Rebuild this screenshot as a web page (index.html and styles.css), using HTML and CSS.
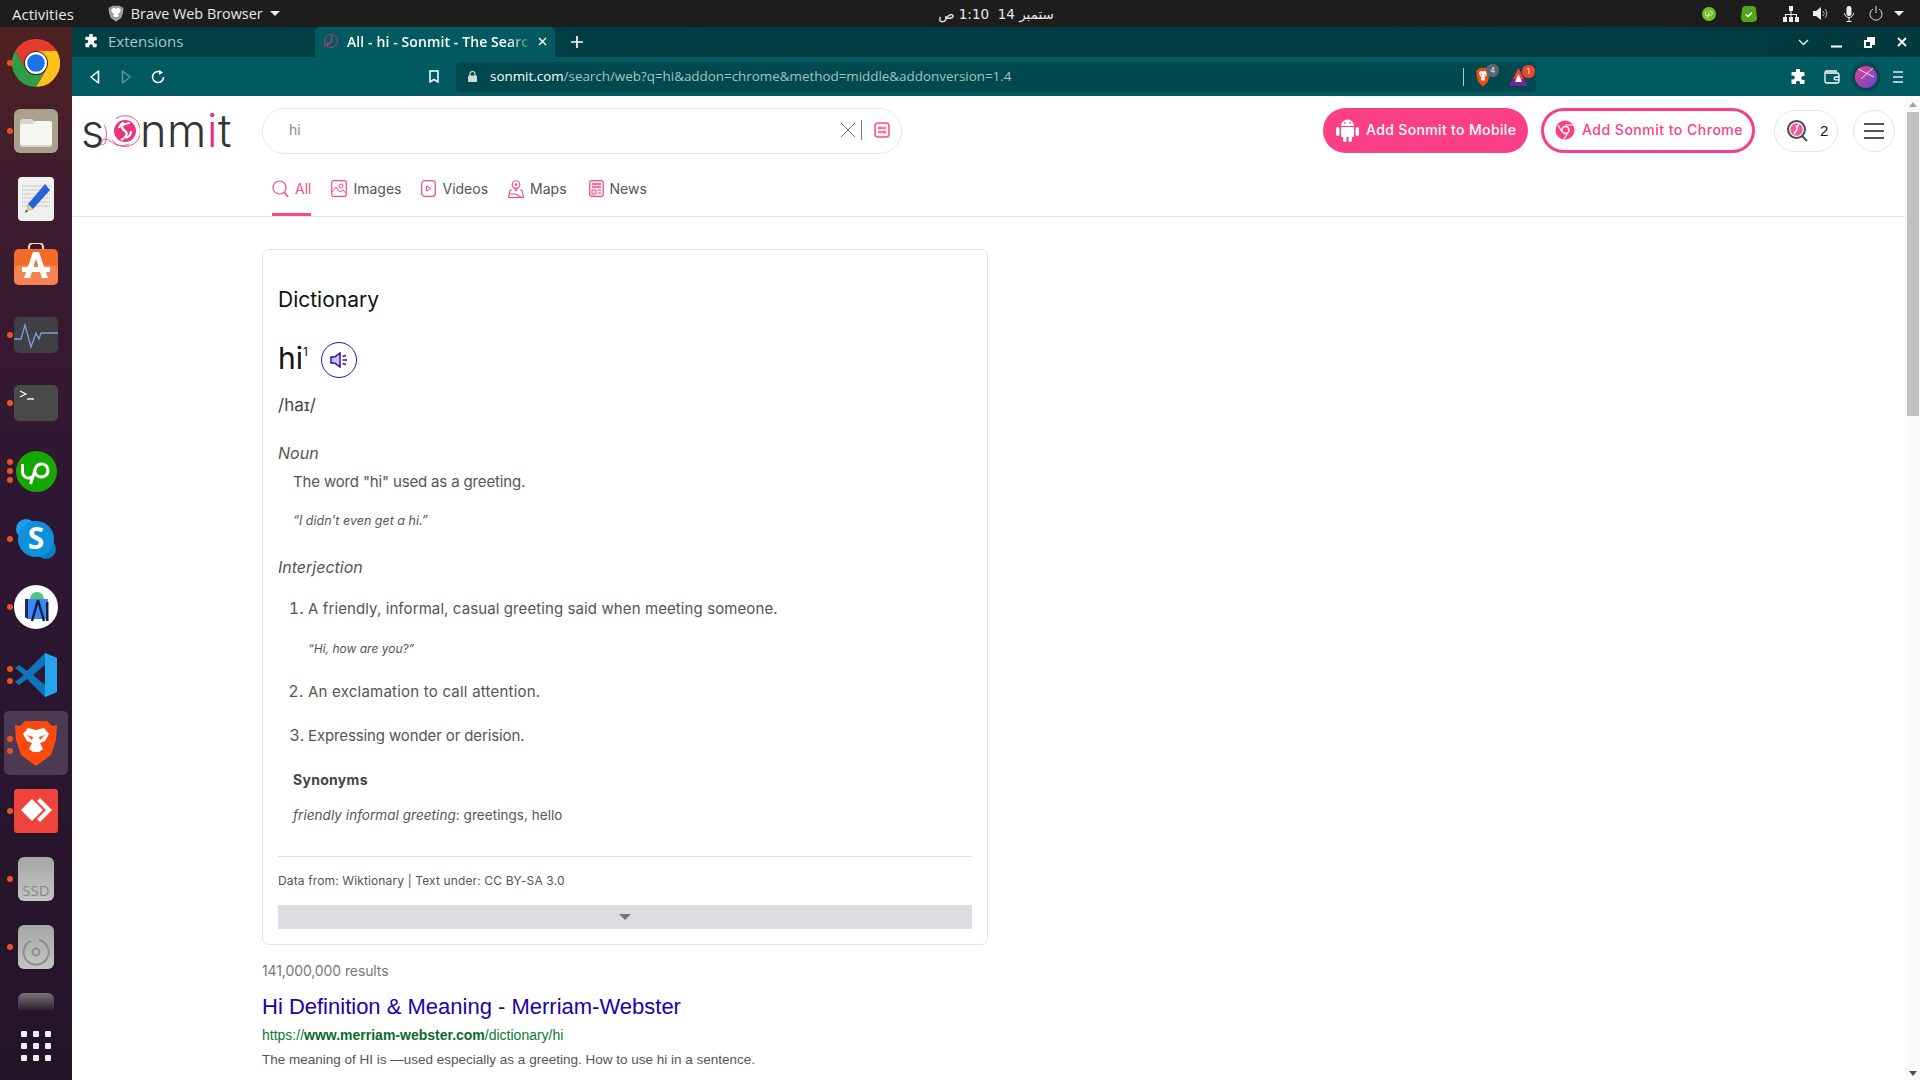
FILE: index.html
```html
<!DOCTYPE html>
<html lang="en">
<head>
<meta charset="utf-8">
<title>All - hi - Sonmit</title>
<link rel="stylesheet" href="styles.css">
</head>
<body>
<svg class="defs" width="0" height="0">
  <defs>
    <symbol id="puzzle" viewBox="0 0 16 16"><path fill="#fff" d="M6 1.200a2 2 0 0 1 4 0V3h3.500a1 1 0 0 1 1 1v3h-1.300a2 2 0 0 0 0 4h1.300v3a1 1 0 0 1-1 1H10v-1.200a2 2 0 0 0-4 0V15H2.500a1 1 0 0 1-1-1v-3.400h1.300a2 2 0 0 0 0-4H1.500V4a1 1 0 0 1 1-1H6z"/></symbol>
    <symbol id="lion" viewBox="0 0 44 48">
      <path fill="#fb4a10" d="M11 2h22l5 5 5-1-1 15-5 15-15 11-15-11L2 21 1 6l5 1z"/>
      <path fill="#fff" d="M14 9l8 2 8-2 5 6-4 7-5 2 3 6-4 3h-6l-4-3 3-6-5-2-4-7z"/>
      <path fill="#fb4a10" d="M13 16l6 2-1 3zM31 16l-6 2 1 3z"/>
    </symbol>
  </defs>
</svg>

<header class="gnome-bar">
  <span class="activities">Activities</span>
  <span class="app-menu">
    <svg class="app-lion" width="16" height="17"><use href="#lion"/></svg>
    <span>Brave Web Browser</span>
    <i class="caret"></i>
  </span>
  <span class="clock" dir="rtl">ستمبر 14&nbsp;&nbsp;1:10 ص</span>
  <span class="tray">
    <svg width="14" height="14" viewBox="0 0 14 14" class="tray-up"><circle cx="7" cy="7" r="7" fill="#6cc12b"/><path d="M3.500 4.500v3a1.500 1.500 0 0 0 3 0c0-1 .5-3 2-3a1.800 1.800 0 0 1 0 3.800c-1 0-1.700-.6-2-1.500M5.500 11l1.200-4" fill="none" stroke="#dff5c8" stroke-width=".9"/></svg>
    <svg width="16" height="16" viewBox="0 0 16 16" class="tray-ok"><path d="M5 0h6a4 4 0 0 1 4 3l1 8a4 4 0 0 1-4 5H5a4 4 0 0 1-5-4l1-9a4 4 0 0 1 4-3z" fill="#55a51c"/><path d="M5 8.500l2 2 4-4" fill="none" stroke="#fff" stroke-width="1.500"/></svg>
    <svg width="16" height="16" viewBox="0 0 16 16" class="tray-net"><path fill="#eee" d="M6 0h4v5H6zM0 11h4v5H0zM6 11h4v5H6zM12 11h4v5h-4zM7.500 5h1v3h5.500v3h-1V9H8.500v2h-1V9H3v2H2V8h5.500z"/></svg>
    <svg width="15" height="15" viewBox="0 0 15 15" class="tray-vol"><path fill="#eee" d="M0 5h3l5-4v13l-5-4H0z"/><path d="M10 5a3.500 3.500 0 0 1 0 5M12 3a6.500 6.500 0 0 1 0 9" fill="none" stroke="#bbb" stroke-width="1"/></svg>
    <svg width="10" height="16" viewBox="0 0 10 16" class="tray-mic"><rect x="2.500" y="0" width="5" height="10" rx="2.500" fill="#eee"/><path d="M.5 7a4.500 4.500 0 0 0 9 0M5 11.500V15M2.500 15.500h5" fill="none" stroke="#eee"/></svg>
    <svg width="14" height="15" viewBox="0 0 14 15" class="tray-pow"><path d="M4 3a6 6 0 1 0 6 0M7 0v7" fill="none" stroke="#ddd" stroke-width="1"/></svg>
    <i class="caret tray-caret"></i>
  </span>
</header>

<div class="desktop">
  <nav class="dock">
    <div class="dock-list">
      <div class="dock-item"><i class="dot"></i>
        <svg width="48" height="48" viewBox="0 0 48 48"><path fill="#e33b2e" d="M24 12h20.800A24 24 0 0 0 3.200 12l10.400 18A12 12 0 0 1 24 12z"/><path fill="#fcc21b" d="M44.800 12H24a12 12 0 0 1 10.400 18L24 48a24 24 0 0 0 20.800-36z"/><path fill="#2f9e44" d="M3.200 12l10.400 18a12 12 0 0 0 20.800 0L24 48A24 24 0 0 1 3.200 12z"/><circle cx="24" cy="24" r="11" fill="#fff"/><circle cx="24" cy="24" r="8.800" fill="#1a73e8"/></svg></div>
      <div class="dock-item"><i class="dot"></i>
        <svg width="44" height="44" viewBox="0 0 44 44"><rect width="44" height="44" rx="6" fill="#a8a18e"/><path d="M6 13a3 3 0 0 1 3-3h9l5 4h13a2 2 0 0 1 2 2v20a2 2 0 0 1-2 2H8a2 2 0 0 1-2-2z" fill="#d8d5cc"/><path d="M6 18a3 3 0 0 1 3-3h10l3-3h14a2 2 0 0 1 2 2v20a2 2 0 0 1-2 2H8a2 2 0 0 1-2-2z" fill="#f7f6f3"/></svg></div>
      <div class="dock-item">
        <svg width="36" height="44" viewBox="0 0 36 44"><rect width="36" height="44" rx="4" fill="#f0f0f0"/><path d="M4 9h28M4 13h28M4 17h28M4 21h28M4 25h28M4 29h28" stroke="#c9c9c9"/><path d="M27 7l5 6-17 19-7 3 2-8z" fill="#2a62d2"/><path d="M10 27l5 5-7 3z" fill="#edc792"/><path d="M8 33l2 1-3 2z" fill="#333"/></svg></div>
      <div class="dock-item">
        <svg class="store-icon" width="44" height="42" viewBox="0 2 44 42"><path d="M15 9V6a4 4 0 0 1 4-4h6a4 4 0 0 1 4 4v3" fill="none" stroke="#f8d9b8" stroke-width="2"/><rect y="8" width="44" height="36" rx="5" fill="#f26b2b"/><rect y="24" width="44" height="20" rx="5" fill="#f58452"/><path d="M19 11h6l9 26h-6l-6-19-6 19h-6z" fill="#fff"/><rect x="8" y="26" width="28" height="5" fill="#fff"/></svg></div>
      <div class="dock-item"><i class="dot"></i>
        <svg width="44" height="36" viewBox="0 0 44 36"><rect width="44" height="36" rx="5" fill="#3f3f45"/><path d="M0 22h7l4-14 6 22 5-14 3 6 2-6h17" fill="none" stroke="#7d9ed6" stroke-width="1.300"/></svg></div>
      <div class="dock-item"><i class="dot"></i>
        <svg width="44" height="36" viewBox="0 0 44 36"><rect width="44" height="36" rx="5" fill="#4a4a4a"/><path d="M6 6l6 3-6 3" fill="none" stroke="#fff" stroke-width="1.200"/><path d="M13 14h7" stroke="#fff" stroke-width="1.400"/></svg></div>
      <div class="dock-item"><i class="dot"></i><i class="dot dot-2"></i><i class="dot dot-3"></i>
        <svg width="41" height="41" viewBox="0 0 41 41"><circle cx="20.500" cy="20.500" r="20.500" fill="#14a800"/><path d="M6.500 13v8a6 6 0 0 0 12 0c0-1 1-8 7-8a6.500 6.500 0 0 1 0 13c-5 0-6.500-4-7-6M14.500 33l5-15" fill="none" stroke="#fff" stroke-width="3"/></svg></div>
      <div class="dock-item"><i class="dot"></i>
        <svg width="42" height="42" viewBox="0 0 42 42"><circle cx="11" cy="11" r="10" fill="#1ba1e8"/><circle cx="31" cy="31" r="10" fill="#0a7fc9"/><circle cx="21" cy="21" r="18" fill="#0f90dc"/><text x="21" y="31" text-anchor="middle" class="skype-s">S</text></svg></div>
      <div class="dock-item"><i class="dot"></i>
        <svg width="44" height="44" viewBox="0 0 44 44"><circle cx="22" cy="22" r="22" fill="#fff"/><path d="M16 14a7 7 0 0 1 14 0z" fill="#4fc57d"/><path d="M11 14h23v20H14l-3-2z" fill="#4285f4"/><path d="M11 14h3v20l-3-2z" fill="#14305e"/><path d="M24 15l-6 21M24 15l6 21" stroke="#0d2347" stroke-width="2.500" fill="none"/><rect x="32" y="17" width="2.500" height="19" fill="#0d2347"/></svg></div>
      <div class="dock-item"><i class="dot"></i><i class="dot dot-2b"></i>
        <svg width="44" height="44" viewBox="0 0 44 44"><path d="M31 0l12 5v34l-12 5-18-18-8 6-4-3 9-7-9-7 4-3 8 6z" fill="#0e74bb"/><path d="M31 0l12 5v34l-12 5z" fill="#25a4ee"/><path d="M31 12L19 22l12 10z" fill="#2f1a33"/></svg></div>
      <div class="dock-item is-active"><i class="dot"></i><i class="dot dot-2b"></i>
        <svg width="44" height="48" viewBox="0 0 44 48"><use href="#lion"/></svg></div>
      <div class="dock-item"><i class="dot"></i>
        <svg width="44" height="44" viewBox="0 0 44 44"><rect width="44" height="44" rx="3" fill="#ef443b"/><path d="M7 21l11-11 11 11-11 11z" fill="#fff"/><path d="M26 9l12 12-12 12-3-3 9-9-9-9z" fill="#fff"/></svg></div>
      <div class="dock-item"><i class="dot"></i>
        <svg width="36" height="44" viewBox="0 0 36 44"><defs><linearGradient id="gr" x1="0" y1="0" x2="0" y2="1"><stop offset="0" stop-color="#a5a5a5"/><stop offset="1" stop-color="#c5c5c5"/></linearGradient></defs><rect width="36" height="44" rx="6" fill="url(#gr)"/><text x="18" y="39" text-anchor="middle" class="ssd-text">SSD</text></svg></div>
      <div class="dock-item"><i class="dot"></i>
        <svg width="36" height="44" viewBox="0 0 36 44"><rect width="36" height="44" rx="6" fill="url(#gr)"/><path d="M21 15a12.500 12.500 0 1 1-8 .8" fill="none" stroke="#8a8a8a" stroke-width="1.800"/><circle cx="18" cy="27" r="3.500" fill="none" stroke="#8a8a8a" stroke-width="1.800"/></svg></div>
      <div class="dock-item dock-faded">
        <svg width="36" height="44" viewBox="0 0 36 44"><defs><linearGradient id="fd" x1="0" y1="0" x2="0" y2="1"><stop offset="0" stop-color="#777"/><stop offset=".4" stop-color="#2a1c2e"/></linearGradient></defs><rect width="36" height="44" rx="6" fill="url(#fd)"/></svg></div>
    </div>
    <div class="dock-grid"><i></i><i></i><i></i><i></i><i></i><i></i><i></i><i></i><i></i></div>
  </nav>

  <div class="browser">
    <div class="tabstrip">
      <div class="tab">
        <svg width="14" height="14"><use href="#puzzle"/></svg>
        <span>Extensions</span>
      </div>
      <div class="tab tab-active">
        <svg width="16" height="16" viewBox="0 0 16 16"><circle cx="8" cy="8" r="6.500" fill="none" stroke="#c4386f"/><path d="M9.500 3C6 5 11 7 8 9s-4 2-3 4M1 13l4-3" fill="none" stroke="#c4386f" stroke-width="1.300"/></svg>
        <span class="tab-title">All - hi - Sonmit - The Searc</span>
        <svg class="tab-x" width="9" height="9" viewBox="0 0 9 9"><path d="M1 1l7 7M8 1L1 8" stroke="#fff" stroke-width="1.400"/></svg>
      </div>
      <svg class="tab-new" width="12" height="12" viewBox="0 0 12 12"><path d="M6 0v12M0 6h12" stroke="#fff" stroke-width="1.700"/></svg>
      <div class="win-controls">
        <svg width="11" height="7" viewBox="0 0 11 7"><path d="M1 1l4.500 4.500L10 1" fill="none" stroke="#dfe" stroke-width="1.300"/></svg>
        <svg width="11" height="11" viewBox="0 0 11 11"><path d="M0 9.500h11" stroke="#fff" stroke-width="2"/></svg>
        <svg width="11" height="11" viewBox="0 0 11 11"><path d="M3 0h8v8H8V3H3z" fill="#fff"/><rect x="1" y="4" width="6" height="6" fill="none" stroke="#fff" stroke-width="2"/></svg>
        <svg width="10" height="10" viewBox="0 0 10 10"><path d="M1 1l8 8M9 1L1 9" stroke="#fff" stroke-width="1.800"/></svg>
      </div>
    </div>

    <div class="toolbar">
      <span class="tool"><svg width="11" height="16" viewBox="0 0 11 16"><path d="M9.500 2v12L2 8z" fill="none" stroke="#fff" stroke-width="1.600" stroke-linejoin="round"/></svg></span>
      <span class="tool"><svg width="11" height="16" viewBox="0 0 11 16"><path d="M1.500 2v12L9 8z" fill="none" stroke="#5f8e92" stroke-width="1.600" stroke-linejoin="round"/></svg></span>
      <span class="tool"><svg width="14" height="14" viewBox="0 0 14 14"><path d="M12.500 7A5.500 5.500 0 1 1 8.500 1.700" fill="none" stroke="#fff" stroke-width="1.600"/><path d="M8 0v5l4-2.500z" fill="#fff"/></svg></span>
      <span class="tool tool-mark"><svg width="10" height="13" viewBox="0 0 10 13"><path d="M1 1h8v11L5 9.500 1 12z" fill="none" stroke="#fff" stroke-width="1.500"/></svg></span>
      <div class="urlbar">
        <svg class="lock" width="9" height="11" viewBox="0 0 9 11"><path d="M2 5V3a2.500 2.500 0 0 1 5 0v2" fill="none" stroke="#cfdcdd" stroke-width="1.200"/><rect y="4.500" width="9" height="6.500" rx="1" fill="#cfdcdd"/></svg>
        <span class="url"><b>sonmit.com</b>/search/web?q=hi&amp;addon=chrome&amp;method=middle&amp;addonversion=1.4</span>
        <span class="url-ext">
          <i class="url-sep"></i>
          <span class="ext ext-brave">
            <svg width="14" height="20" viewBox="0 0 44 48" preserveAspectRatio="none"><use href="#lion"/></svg>
            <em class="badge badge-grey">4</em>
          </span>
          <span class="ext ext-tri">
            <svg width="19" height="18" viewBox="0 0 19 18"><path d="M9.500 0L19 18H0z" fill="#6b2b93"/><path d="M9.500 0L15 11H4z" fill="#f1442e"/><path d="M9.500 6l3.500 8H6z" fill="#fff"/></svg>
            <em class="badge badge-red">1</em>
          </span>
        </span>
      </div>
      <div class="tool-right">
        <span class="tool tool-ext"><svg width="16" height="16"><use href="#puzzle"/></svg></span>
        <span class="tool tool-wallet"><svg width="16" height="14" viewBox="0 0 16 14"><path d="M13 1H3a2 2 0 0 0-2 2v8a2 2 0 0 0 2 2h10.500a1.500 1.500 0 0 0 1.500-1.500v-7A1.500 1.500 0 0 0 13.500 3H2" fill="none" stroke="#fff" stroke-width="1.300"/><path d="M15 7h-3.500a1.300 1.300 0 0 0 0 2.800H15" fill="none" stroke="#fff" stroke-width="1.300"/></svg></span>
        <span class="tool tool-profile"><svg width="22" height="22" viewBox="0 0 22 22"><defs><linearGradient id="pf" x1="0" y1="0" x2="1" y2="1"><stop offset="0" stop-color="#ef3d8c"/><stop offset="1" stop-color="#5a4ad8"/></linearGradient></defs><circle cx="11" cy="11" r="11" fill="url(#pf)"/><path d="M3 3l16 8M18 2L6 13" stroke="#f6dbe8" stroke-width="1"/></svg></span>
        <span class="tool"><svg width="10" height="12" viewBox="0 0 10 12"><path d="M0 1h10M0 6h10M0 11h10" stroke="#dfeeee" stroke-width="1.600"/></svg></span>
      </div>
    </div>

    <div class="viewport">
      <div class="page">
        <div class="site-head">
          <div class="head-row">
            <a class="logo"><span class="logo-s">s</span><svg class="logo-mark" width="41" height="38" viewBox="0 0 41 38"><circle cx="26" cy="19" r="11" fill="#f0327c"/><path d="M31 11c-8 1-10 4-6 7s4 6-3 10M20 16c1-3 3-5 5-5M32 19c0 3-2 6-5 7" fill="none" stroke="#fff" stroke-width="2.200"/><path d="M17 6.500a15.500 15.500 0 1 1-4 21" fill="none" stroke="#f4528f" stroke-width="1"/><path d="M5 13c3 4 3 11 1 18-1 3-5 2-4-1 1-3 5-4 9-1 6 5 13 6 19 3" fill="none" stroke="#f4528f" stroke-width="1"/></svg><span>nm</span><span class="logo-i">i</span><span>t</span></a>
          <div class="search">
            <span class="search-q">hi</span>
            <svg width="16" height="16" viewBox="0 0 16 16"><path d="M1 1l14 14M15 1L1 15" stroke="#777" stroke-width="1"/></svg>
            <i class="search-sep"></i>
            <svg class="search-opt" width="16" height="16" viewBox="0 0 16 16"><rect x="1" y="1" width="14" height="14" rx="3" fill="#fdeef4" stroke="#f2557f" stroke-width="1.500"/><path d="M4 6h8M4 10h8" stroke="#f2557f" stroke-width="1.500"/><path d="M6 4.500v3M10 8.500v3" stroke="#f2557f"/></svg>
          </div>
          <div class="actions">
            <a class="btn btn-fill">
              <svg width="23" height="24" viewBox="0 0 23 24"><path d="M5 8a6.500 6.500 0 0 1 13 0z" fill="#fff"/><circle cx="8.800" cy="4.800" r=".9" fill="#fb3f85"/><circle cx="14.200" cy="4.800" r=".9" fill="#fb3f85"/><rect x="5" y="9" width="13" height="10" rx="1" fill="#fff"/><rect x="0" y="9" width="3.500" height="9" rx="1.700" fill="#fff"/><rect x="19.500" y="9" width="3.500" height="9" rx="1.700" fill="#fff"/><rect x="7" y="18" width="3.500" height="6" rx="1.700" fill="#fff"/><rect x="12.500" y="18" width="3.500" height="6" rx="1.700" fill="#fff"/></svg>
              Add Sonmit to Mobile</a>
            <a class="btn btn-line">
              <svg width="20" height="20" viewBox="0 0 20 20"><circle cx="10" cy="10" r="9.500" fill="#fb3f85"/><circle cx="10.500" cy="10" r="3.500" fill="#fb3f85" stroke="#fff" stroke-width="1.500"/><path d="M10 5h9M7 12L3 5M13 12.500L9 19" stroke="#fff" stroke-width="1.200"/></svg>
              Add Sonmit to Chrome</a>
            <span class="count">
              <svg width="21" height="22" viewBox="0 0 21 22"><circle cx="9.500" cy="9.500" r="8.500" fill="#fff" stroke="#45495a" stroke-width="2"/><circle cx="9.500" cy="9.500" r="6.300" fill="#f65a98"/><path d="M12 5C8 6 11 8.500 9.500 10.500S7 12 7.500 14.500" fill="none" stroke="#fff" stroke-width="1.500"/><path d="M15 16l5 5" stroke="#45495a" stroke-width="2"/></svg>
              <span class="count-n">2</span>
            </span>
            <span class="menu-btn"><i></i><i></i><i></i></span>
          </div>
          </div>
          <div class="nav-tabs">
            <a class="nav-tab is-current">
              <svg width="17" height="18" viewBox="0 0 17 18"><circle cx="7.500" cy="7.500" r="6.500" fill="none" stroke="#f8488b" stroke-width="1.200"/><path d="M12 12l4 5" stroke="#f8488b" stroke-width="1.500"/></svg>All</a>
            <a class="nav-tab">
              <svg width="16" height="17" viewBox="0 0 16 17"><rect x=".7" y=".7" width="14.600" height="15.600" rx="2" fill="#fff" stroke="#f8488b" stroke-width="1.200"/><circle cx="10" cy="6" r="2" fill="none" stroke="#f8488b"/><path d="M1 12l4-5 4 5 3-2 3 3" fill="none" stroke="#f8488b"/></svg>Images</a>
            <a class="nav-tab">
              <svg width="15" height="17" viewBox="0 0 15 17"><rect x=".7" y=".7" width="13.600" height="15.600" rx="3" fill="none" stroke="#f8488b" stroke-width="1.200"/><path d="M5.500 6l4.500 2.500-4.500 2.500z" fill="none" stroke="#f8488b"/></svg>Videos</a>
            <a class="nav-tab">
              <svg width="16" height="18" viewBox="0 0 16 18"><circle cx="8" cy="4.500" r="3.800" fill="none" stroke="#f8488b" stroke-width="1.100"/><circle cx="8" cy="4.500" r="1.300" fill="#f8488b"/><path d="M8 11L5.500 7M8 11l2.500-4M4 10H2l-1.500 7.500h15L14 10h-2M1.500 14h6l6 3.500" fill="none" stroke="#f8488b" stroke-width="1.100"/></svg>Maps</a>
            <a class="nav-tab nav-news">
              <svg width="15" height="17" viewBox="0 0 15 17"><rect x=".7" y=".7" width="13.600" height="15.600" rx="2" fill="#fde7ef" stroke="#f8488b" stroke-width="1.200"/><path d="M3 4h9M3 7h9" stroke="#f8488b" stroke-width="1.500"/><path d="M3 10h4v4H3zM9 10h3M9 13h3" fill="none" stroke="#f8488b"/></svg>News</a>
          </div>
        </div>

        <main class="results">
          <section class="card">
            <h2 class="card-title">Dictionary</h2>
            <div class="word-row">
              <span class="word">hi<sup>1</sup></span>
              <span class="speak"><svg width="18" height="16" viewBox="0 0 18 16"><path d="M1 5h3.500L10 1v14l-5.500-4H1z" fill="#c9bff0" stroke="#2d0fa8" stroke-width="1.500"/><path d="M12.500 4.500l3.500-1M12.500 8H17M12.500 11.500l3.500 1" stroke="#2d0fa8" stroke-width="1.500"/></svg></span>
            </div>
            <p class="phon">/haɪ/</p>
            <p class="pos">Noun</p>
            <p class="def">The word "hi" used as a greeting.</p>
            <p class="quote quote-first">“I didn't even get a hi.”</p>
            <p class="pos pos-int">Interjection</p>
            <ol class="senses">
              <li class="sense-1">A friendly, informal, casual greeting said when meeting someone.
                <p class="quote quote-li">“Hi, how are you?”</p></li>
              <li class="sense-2">An exclamation to call attention.</li>
              <li class="sense-3">Expressing wonder or derision.</li>
            </ol>
            <p class="syn-title">Synonyms</p>
            <p class="syn"><em>friendly informal greeting</em>: greetings, hello</p>
            <hr class="rule">
            <p class="source">Data from: Wiktionary | Text under: CC BY-SA 3.0</p>
            <div class="expand"><i></i></div>
          </section>
          <p class="count-line">141,000,000 results</p>
          <a class="res-title">Hi Definition &amp; Meaning - Merriam-Webster</a>
          <p class="res-url">https://<b>www.merriam-webster.com</b>/dictionary/hi</p>
          <p class="res-desc">The meaning of HI is —used especially as a greeting. How to use hi in a sentence.</p>
        </main>
      </div>
      <div class="scrollbar"><i class="arrow-up"></i><i class="thumb"></i><i class="arrow-down"></i></div>
    </div>
  </div>
</div>
</body>
</html>
```

FILE: styles.css
```css
* { box-sizing: border-box; }
html, body { margin: 0; height: 100%; overflow: hidden; }
body { display: flex; flex-direction: column; width: 1920px; height: 1080px; font-family: Inter, "Liberation Sans", sans-serif; background: #fff; }
p, h2, ol { margin: 0; padding: 0; }
.defs { position: absolute; }
svg { display: block; flex: none; }

.gnome-bar { height: 27px; flex: none; background: #1d1d1d; color: #e8e8e8; display: flex; align-items: center; font-family: "Open Sans", "DejaVu Sans", sans-serif; font-size: 15px; position: relative; }
.activities { margin-left: 12px; }
.app-menu { display: flex; align-items: center; margin-left: 34px; gap: 7px; font-size: 14.400px; }
.app-lion { filter: grayscale(1) brightness(1.5); }
.caret { width: 0; height: 0; border: 5px solid transparent; border-top: 5px solid #eee; border-bottom: 0; }
.clock { position: absolute; left: 937px; width: 118px; text-align: center; font-family: "DejaVu Sans", sans-serif; font-size: 13.500px; white-space: nowrap; }
.tray { margin-left: auto; display: flex; align-items: center; padding-right: 16px; }
.tray-ok { margin-left: 25px; }
.tray-net { margin-left: 26px; }
.tray-vol { margin-left: 14px; }
.tray-mic { margin-left: 16px; }
.tray-pow { margin-left: 15px; }
.tray-caret { margin-left: 11px; }

.desktop { flex: 1; min-height: 0; display: flex; }
.dock { width: 72px; flex: none; display: flex; flex-direction: column; background: linear-gradient(180deg, #4f2222 0, #3e1c2e 16%, #2e1733 45%, #241428 100%); }
.dock-list { flex: 1; min-height: 0; overflow: hidden; padding-top: 2px; }
.dock-item { height: 68px; display: flex; align-items: center; justify-content: center; position: relative; }
.store-icon { margin-top: -6px; }
.dock-item.is-active { background: #4b3a52; border-radius: 5px; width: 64px; height: 64px; margin: 2px 4px; }
.is-active .dot { left: 3px; }
.dot { position: absolute; left: 7px; top: 31px; width: 6px; height: 6px; border-radius: 50%; background: #e95420; }
.dot-2 { top: 22px; }
.dot-3 { top: 40px; }
.dot-2b { top: 37px; }
.dock-item > .dot:first-child:nth-last-child(3) { top: 25px; }
.skype-s { font: 700 30px "Open Sans", sans-serif; fill: #fff; }
.ssd-text { font: 400 15px "Open Sans", sans-serif; fill: #8a8a8a; }
.dock-grid { height: 70px; flex: none; display: grid; grid-template-columns: repeat(3, 6px); grid-template-rows: repeat(3, 6px); gap: 6px; justify-content: center; align-content: center; padding-top: 1px; }
.dock-grid i { background: #eee; border-radius: 1px; }

.browser { flex: 1; min-width: 0; display: flex; flex-direction: column; }
.tabstrip { height: 30px; flex: none; display: flex; align-items: flex-end; background: linear-gradient(90deg, #003f44, #003a3f); font-family: "Open Sans", sans-serif; font-size: 15px; color: #a8c6c8; }
.tab { width: 243px; height: 30px; display: flex; align-items: center; gap: 10px; padding: 0 0 2px 12px; }
.tab-active { width: 240px; padding-left: 8px; gap: 8px; background: #005a60; border-radius: 5px 5px 0 0; color: #fff; font-weight: 600; font-size: 14px; letter-spacing: .1px; }
.tab-title { width: 181px; flex: none; white-space: nowrap; -webkit-mask-image: linear-gradient(90deg, #000 88%, rgba(0,0,0,.2)); mask-image: linear-gradient(90deg, #000 88%, rgba(0,0,0,.2)); }
.tab-x { margin-left: 2px; }
.tab-new { margin: 0 0 9px 16px; }
.win-controls { margin-left: auto; height: 30px; display: flex; align-items: center; gap: 22px; padding-right: 13px; }

.toolbar { height: 39px; flex: none; display: flex; align-items: center; padding-left: 6px; background: #005a60; }
.tool { width: 32px; height: 32px; display: flex; align-items: center; justify-content: center; flex: none; }
.tool-mark { margin-left: 244px; }
.urlbar { width: 1080px; height: 30px; margin-left: 6px; display: flex; align-items: center; background: #00494f; border-radius: 5px; padding-left: 12px; color: #a5c2c4; font-family: "Open Sans", sans-serif; font-size: 13.400px; }
.lock { margin-right: 13px; }
.url { padding-bottom: 1px; }
.url b { color: #fff; font-weight: 400; }
.url-ext { margin-left: auto; display: flex; align-items: center; }
.url-sep { width: 1px; height: 18px; background: #b5c9ca; }
.ext { position: relative; display: block; }
.ext-brave { margin-left: 12px; }
.ext-tri { margin-left: 19px; margin-right: 8px; }
.badge { position: absolute; top: -3px; left: 10px; width: 13px; height: 13px; border-radius: 6px; font: 400 8px/13px Inter, sans-serif; text-align: center; color: #ddd; }
.badge-grey { background: #5c6670; }
.badge-red { background: #f1442e; left: 13px; color: #fff; }
.tool-right { margin-left: auto; display: flex; padding-right: 6px; }
.tool-ext { margin-right: 2px; }
.tool-wallet { margin-right: 2px; }
.tool-profile { background: radial-gradient(circle, #0a474d 14px, transparent 15px); }

.viewport { flex: 1; min-height: 0; display: flex; overflow: hidden; }
.page { flex: 1; min-width: 0; overflow: hidden; }
.site-head { height: 121px; border-bottom: 1px solid #e3e3e3; padding-top: 12px; }
.head-row { display: flex; align-items: flex-start; padding-left: 10px; height: 46px; }
.logo { width: 150px; height: 46px; display: flex; align-items: center; font-weight: 300; font-size: 45px; line-height: 46px; color: #333; flex: none; letter-spacing: .6px; }
.logo-s { width: 18px; margin-left: -1px; letter-spacing: 0; }
.logo-mark { margin: 0 0 0 0; }
.logo-i { color: #ef2a7b; }
.search { width: 640px; height: 46px; margin-left: 30px; border: 1px solid #e5e5e5; border-radius: 23px; display: flex; align-items: center; padding: 0 11px 3px 26px; color: #888; font-size: 14px; }
.search-q { flex: 1; }
.search-sep { width: 1px; height: 20px; background: #777; margin: 0 12px 0 5px; }
.actions { margin-left: auto; display: flex; align-items: center; padding-right: 10px; }
.btn { height: 45px; border-radius: 23px; display: flex; align-items: center; gap: 7px; font-size: 14px; font-weight: 500; color: #fb3f85; white-space: nowrap; letter-spacing: .35px; padding-bottom: 2px; }
.btn-fill { width: 205px; background: #fb3f85; color: #fff; padding-left: 13px; }
.btn-line { width: 214px; margin-left: 13px; border: 3px solid #fb3f85; background: #fff; padding-left: 11px; letter-spacing: .5px; }
.count { width: 64px; height: 42px; margin-left: 19px; border: 1px solid #e5e5e5; border-radius: 21px; display: flex; align-items: center; gap: 12px; padding-left: 12px; font-size: 14px; color: #111; }
.count-n { font-family: "Liberation Sans", sans-serif; font-size: 15px; }
.menu-btn { width: 42px; height: 42px; margin-left: 15px; border: 1px solid #e5e5e5; border-radius: 50%; display: flex; flex-direction: column; justify-content: center; gap: 5px; padding: 0 10px; }
.menu-btn i { height: 2px; background: #555; }

.nav-tabs { display: flex; padding-left: 200px; margin-top: 12px; gap: 20px; height: 50px; }
.nav-tab { height: 50px; display: flex; align-items: center; gap: 6px; font-size: 14px; color: #555; padding-bottom: 5px; }
.nav-news { margin-left: 2px; }
.is-current { color: #f8488b; border-bottom: 3px solid #f8488b; padding-bottom: 2px; }

.results { padding: 32px 0 0 190px; width: 916px; }
.card { width: 726px; border: 1px solid #e3e3e3; border-radius: 7px; padding: 35px 15px 15px; }
.card-title { font-weight: 400; font-size: 21px; line-height: 30px; color: #111; }
.word-row { display: flex; align-items: center; margin-top: 27px; height: 36px; gap: 13px; }
.word { font-size: 30px; line-height: 32px; color: #111; margin-top: -4px; }
.word sup { font-size: 12px; vertical-align: 13px; line-height: 0; }
.speak { width: 36px; height: 36px; border: 1px solid #2d0fa8; border-radius: 50%; display: flex; align-items: center; justify-content: center; }
.phon { margin-top: 15px; font-size: 17px; line-height: 24px; color: #444; }
.pos { margin-top: 24px; font-size: 16px; line-height: 24px; font-style: italic; color: #555; }
.def { margin: 5px 0 0 15px; font-size: 15px; line-height: 24px; color: #555; letter-spacing: -.15px; }
.quote { margin: 17px 0 0 15px; font-size: 12px; line-height: 20px; font-style: italic; color: #555; letter-spacing: 0; }
.quote-first { font-size: 12.500px; }
.senses { margin-top: 17px; padding-left: 30px; font-size: 15px; line-height: 24px; color: #555; }
.senses li::marker { font-size: 16px; }
.quote-li { margin: 18px 0 0; }
.sense-1 { letter-spacing: .1px; }
.sense-2 { margin-top: 20px; letter-spacing: .22px; }
.sense-3 { margin-top: 19px; letter-spacing: -.12px; }
.syn-title { margin: 20px 0 0 15px; font-size: 14px; line-height: 24px; font-weight: 700; color: #444; letter-spacing: .3px; }
.syn { margin: 11px 0 0 15px; font-size: 13.500px; line-height: 24px; color: #555; letter-spacing: .05px; }
.rule { margin: 29px 0 0; border: 0; border-top: 1px solid #ddd; height: 1px; }
.source { margin-top: 14px; font-size: 12px; line-height: 20px; color: #555; letter-spacing: .13px; }
.expand { height: 24px; margin-top: 14px; background: #dcdde1; display: flex; align-items: center; justify-content: center; }
.expand i { width: 0; height: 0; border: 6px solid transparent; border-top: 6px solid #777; border-bottom: 0; }
.count-line { margin-top: 16px; font-size: 14px; line-height: 20px; color: #777; letter-spacing: -.1px; }
.res-title { display: block; margin-top: 12px; font: 400 22px/28px "Liberation Sans", sans-serif; color: #2200aa; white-space: nowrap; }
.res-url { margin-top: 4px; font: 400 14px/20px "Liberation Sans", sans-serif; color: #0a7a2f; }
.res-url b { color: #0a6b2a; }
.res-desc { margin-top: 6px; font: 400 13.500px/18px "Liberation Sans", sans-serif; color: #555; }

.scrollbar { width: 15px; flex: none; background: #fafafa; display: flex; flex-direction: column; align-items: center; }
.arrow-up { margin-top: 6px; width: 0; height: 0; border: 4px solid transparent; border-bottom: 5px solid #a3a3a3; border-top: 0; }
.thumb { width: 12px; height: 304px; margin-top: 5px; background: #c1c1c1; }
.arrow-down { margin-top: auto; margin-bottom: 4px; width: 0; height: 0; border: 4px solid transparent; border-top: 5px solid #505050; border-bottom: 0; }
```
